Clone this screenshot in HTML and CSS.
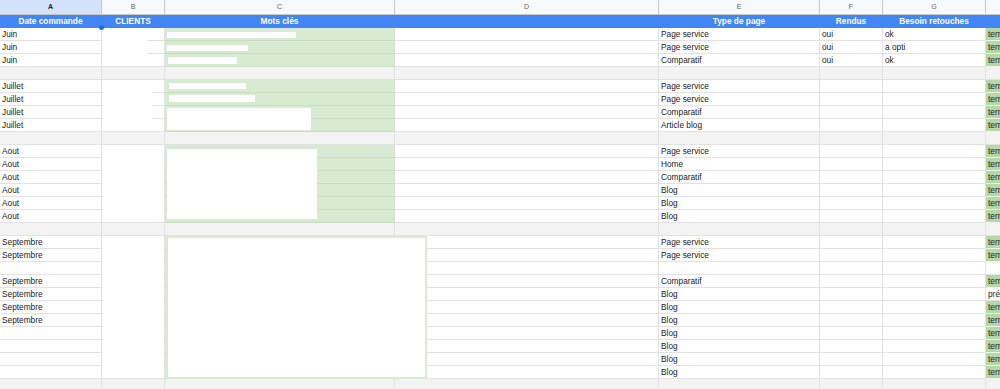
FILE: index.html
```html
<!DOCTYPE html>
<html lang="fr">
<head>
<meta charset="utf-8">
<title>Suivi commandes</title>
<link rel="stylesheet" href="styles.css">
</head>
<body>
<div class="sheet">
  <div class="row colhead">
    <div class="sel">A</div><div>B</div><div>C</div><div>D</div><div>E</div><div>F</div><div>G</div><div>H</div>
  </div>
  <div class="row head">
    <div>Date commande</div><div>CLIENTS</div><div>Mots clés</div><div></div><div>Type de page</div><div>Rendus</div><div>Besoin retouches</div><div></div>
  </div>

  <div class="row"><div>Juin</div><div></div><div class="kw"></div><div></div><div>Page service</div><div>oui</div><div>ok</div><div class="done">terminé</div></div>
  <div class="row"><div>Juin</div><div></div><div class="kw"></div><div></div><div>Page service</div><div>oui</div><div>a opti</div><div class="done">terminé</div></div>
  <div class="row"><div>Juin</div><div></div><div class="kw"></div><div></div><div>Comparatif</div><div>oui</div><div>ok</div><div class="done">terminé</div></div>
  <div class="row sep"><div></div><div></div><div></div><div></div><div></div><div></div><div></div><div></div></div>

  <div class="row"><div>Juillet</div><div></div><div class="kw"></div><div></div><div>Page service</div><div></div><div></div><div class="done">terminé</div></div>
  <div class="row"><div>Juillet</div><div></div><div class="kw"></div><div></div><div>Page service</div><div></div><div></div><div class="done">terminé</div></div>
  <div class="row"><div>Juillet</div><div></div><div class="kw"></div><div></div><div>Comparatif</div><div></div><div></div><div class="done">terminé</div></div>
  <div class="row"><div>Juillet</div><div></div><div class="kw"></div><div></div><div>Article blog</div><div></div><div></div><div class="done">terminé</div></div>
  <div class="row sep"><div></div><div></div><div></div><div></div><div></div><div></div><div></div><div></div></div>

  <div class="row"><div>Aout</div><div></div><div class="kw"></div><div></div><div>Page service</div><div></div><div></div><div class="done">terminé</div></div>
  <div class="row"><div>Aout</div><div></div><div class="kw"></div><div></div><div>Home</div><div></div><div></div><div class="done">terminé</div></div>
  <div class="row"><div>Aout</div><div></div><div class="kw"></div><div></div><div>Comparatif</div><div></div><div></div><div class="done">terminé</div></div>
  <div class="row"><div>Aout</div><div></div><div class="kw"></div><div></div><div>Blog</div><div></div><div></div><div class="done">terminé</div></div>
  <div class="row"><div>Aout</div><div></div><div class="kw"></div><div></div><div>Blog</div><div></div><div></div><div class="done">terminé</div></div>
  <div class="row"><div>Aout</div><div></div><div class="kw"></div><div></div><div>Blog</div><div></div><div></div><div class="done">terminé</div></div>
  <div class="row sep"><div></div><div></div><div></div><div></div><div></div><div></div><div></div><div></div></div>

  <div class="row"><div>Septembre</div><div></div><div class="kw"></div><div></div><div>Page service</div><div></div><div></div><div class="done">terminé</div></div>
  <div class="row"><div>Septembre</div><div></div><div class="kw"></div><div></div><div>Page service</div><div></div><div></div><div class="done">terminé</div></div>
  <div class="row"><div></div><div></div><div class="kw"></div><div></div><div></div><div></div><div></div><div></div></div>
  <div class="row"><div>Septembre</div><div></div><div class="kw"></div><div></div><div>Comparatif</div><div></div><div></div><div class="done">terminé</div></div>
  <div class="row"><div>Septembre</div><div></div><div class="kw"></div><div></div><div>Blog</div><div></div><div></div><div>prévu</div></div>
  <div class="row"><div>Septembre</div><div></div><div class="kw"></div><div></div><div>Blog</div><div></div><div></div><div class="done">terminé</div></div>
  <div class="row"><div>Septembre</div><div></div><div class="kw"></div><div></div><div>Blog</div><div></div><div></div><div class="done">terminé</div></div>
  <div class="row"><div></div><div></div><div class="kw"></div><div></div><div>Blog</div><div></div><div></div><div class="done">terminé</div></div>
  <div class="row"><div></div><div></div><div class="kw"></div><div></div><div>Blog</div><div></div><div></div><div class="done">terminé</div></div>
  <div class="row"><div></div><div></div><div class="kw"></div><div></div><div>Blog</div><div></div><div></div><div class="done">terminé</div></div>
  <div class="row"><div></div><div></div><div class="kw"></div><div></div><div>Blog</div><div></div><div></div><div class="done">terminé</div></div>
  <div class="row sep"><div></div><div></div><div></div><div></div><div></div><div></div><div></div><div></div></div>

  <span class="mask mb1"></span>
  <span class="mask mb2"></span>
  <span class="mask mb3"></span>
  <span class="mask mb4"></span>
  <span class="mask mc1"></span>
  <span class="mask mc2"></span>
  <span class="mask mc3"></span>
  <span class="mask mc4"></span>
  <span class="mask mc5"></span>
  <span class="mask mc6"></span>
  <span class="mask mc7"></span>
  <span class="mask mc8"></span>
  <span class="dot"></span>
</div>
</body>
</html>
```

FILE: styles.css
```css
html, body {
  margin: 0;
  padding: 0;
  background: #fff;
  overflow: hidden;
}

.sheet {
  position: relative;
  display: grid;
  grid-template-columns: 102px 63px 230px 264px 161px 63px 103px 120px;
  grid-template-rows: 15px;
  grid-auto-rows: 13px;
  width: 1106px;
  font-family: "Liberation Sans", Arial, sans-serif;
  color: #202124;
}

.row {
  display: contents;
}

.row > div {
  box-sizing: border-box;
  border-right: 1px solid #e2e2e2;
  border-bottom: 1px solid #e2e2e2;
  padding: 0 2px;
  font-size: 8.3px;
  line-height: 13px;
  white-space: nowrap;
  overflow: hidden;
  background: #fff;
}

.colhead > div {
  background: #f8f9fa;
  border-right-color: #c7c7c7;
  border-bottom-color: #c7c7c7;
  text-align: center;
  font-size: 7px;
  line-height: 14px;
  color: #5f6368;
}

.colhead > .sel {
  background: #d3e3fd;
  color: #1f1f1f;
  font-weight: bold;
}

.head > div {
  background: #4285f4;
  border-right-color: #4285f4;
  border-bottom-color: #4285f4;
  color: #fff;
  font-weight: bold;
  text-align: center;
}

.sep > div {
  background: #f3f3f3;
}

.row > .kw {
  background: #d9ead3;
  border-bottom-color: #c9dcc2;
  border-right-color: #d0e2c9;
}

.row > .done {
  background: #b6d7a8;
  border-bottom-color: #eef4eb;
}

.mask {
  position: absolute;
  background: #fff;
}

.mb1 { left: 103px; top: 28px; width: 45px; height: 38px; }
.mb2 { left: 103px; top: 80px; width: 49px; height: 51px; }
.mb3 { left: 103px; top: 145px; width: 61px; height: 77px; }
.mb4 { left: 103px; top: 236px; width: 61px; height: 142px; }

.mc1 { left: 167px; top: 32px; width: 129px; height: 6px; }
.mc2 { left: 167px; top: 45px; width: 81px; height: 6px; }
.mc3 { left: 168px; top: 57px; width: 69px; height: 7px; }
.mc4 { left: 169px; top: 83px; width: 77px; height: 6px; }
.mc5 { left: 169px; top: 95px; width: 86px; height: 7px; }
.mc6 { left: 167px; top: 108px; width: 144px; height: 22px; }
.mc7 { left: 167px; top: 149px; width: 150px; height: 70px; }
.mc8 {
  left: 166px;
  top: 236px;
  width: 261px;
  height: 143px;
  box-sizing: border-box;
  border: 2px solid #d9ead3;
}

.dot {
  position: absolute;
  left: 99px;
  top: 25px;
  width: 5px;
  height: 5px;
  border-radius: 50%;
  background: #1a73e8;
}
```
